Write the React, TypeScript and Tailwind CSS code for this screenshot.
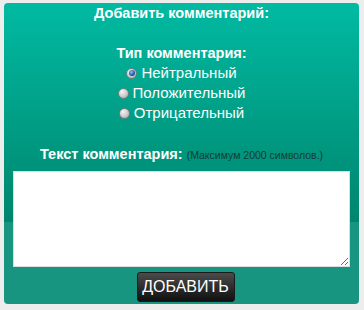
import React from "react";

function Radio({ checked }: { checked?: boolean }) {
  return (
    <span className="inline-flex items-center justify-center w-[11px] h-[11px] rounded-full border border-[#7c7c7c] bg-[radial-gradient(circle_at_35%_30%,#f4f4f4_0%,#cfcfcf_50%,#a3a3a3_100%)] mr-[4px]">
      {checked && (
        <span className="block w-[6px] h-[6px] rounded-full bg-[radial-gradient(circle_at_40%_35%,#8cc4ff_0%,#2a64ad_50%,#0b2a5a_100%)]" />
      )}
    </span>
  );
}

export default function App() {
  return (
    <div className="w-[364px] h-[310px] bg-[#ededed] pt-[3px] pl-[4px] font-['Liberation_Sans',Arial,sans-serif]">
      <div className="w-[355px] h-[301px] rounded-[4px] bg-[#189581] bg-[linear-gradient(#01baa2,#00856d)] bg-no-repeat bg-[length:100%_219px] flex flex-col items-center text-white">
        <div className="text-[14.5px] leading-[20px] font-bold">Добавить комментарий:</div>
        <div className="h-[20px]" />
        <div className="text-[14.5px] leading-[20px] font-bold">Тип комментария:</div>
        <div className="flex flex-col items-center text-[15px] leading-[20px]">
          <label className="flex items-center"><Radio checked />Нейтральный</label>
          <label className="flex items-center"><Radio />Положительный</label>
          <label className="flex items-center"><Radio />Отрицательный</label>
        </div>
        <div className="h-[20px]" />
        <div className="leading-[20px] mt-[1px]">
          <span className="text-[14.5px] font-bold">Текст комментария: </span>
          <span className="text-[10.5px] text-[#123d35]">(Максимум 2000 символов.)</span>
        </div>
        <textarea className="mt-[6px] w-[337px] h-[96px] bg-white border border-[#dcdcdc] outline-none text-black" />
        <button className="mt-[5px] ml-[8px] w-[98px] h-[30px] rounded-[3px] bg-[linear-gradient(#4b4b4b,#101010)] text-white text-[16px] leading-[28px] border border-[#1a1a1a]">
          ДОБАВИТЬ
        </button>
      </div>
    </div>
  );
}
